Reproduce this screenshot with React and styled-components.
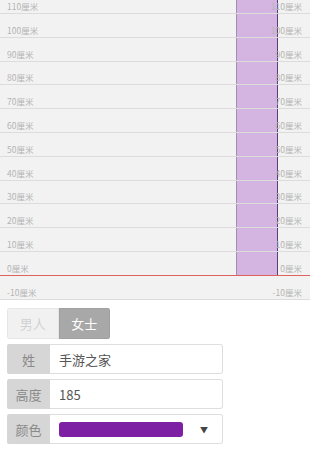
import styled, { createGlobalStyle } from "styled-components";

const marks = [110, 100, 90, 80, 70, 60, 50, 40, 30, 20, 10, 0, -10];

export default function App() {
    return (
        <>
            <Global />
            <Page>
                <Chart>
                    <Rows>
                        {marks.map((m) => (
                            <Row key={m} zero={m === 0}>
                                <span>{m}厘米</span>
                                <span>{m}厘米</span>
                            </Row>
                        ))}
                    </Rows>
                    <Bar />
                </Chart>
                <Form>
                    <Segments>
                        <Segment>男人</Segment>
                        <Segment active>女士</Segment>
                    </Segments>
                    <Field>
                        <Label>姓</Label>
                        <Input>手游之家</Input>
                    </Field>
                    <Field>
                        <Label>高度</Label>
                        <Input>185</Input>
                    </Field>
                    <Field>
                        <Label>颜色</Label>
                        <Input>
                            <Swatch />
                            <Caret>▼</Caret>
                        </Input>
                    </Field>
                </Form>
            </Page>
        </>
    );
}

const Global = createGlobalStyle`
    body{
        margin: 0;
        background: #ffffff;
        font-family: "Noto Sans CJK SC", "Liberation Sans", sans-serif;
    }
`
const Page = styled.div`
    width: 310px;
    height: 451px;
    overflow: hidden;
`
const Chart = styled.div`
    position: relative;
    height: 300px;
    overflow: hidden;
    background: #f2f2f2;
`
const Rows = styled.div`
    margin-top: -9.8px;
`
const Row = styled.div`
    height: 23.8px;
    box-sizing: border-box;
    border-bottom: 1px solid ${(p) => (p.zero ? "#e0625e" : "#dcdcdc")};
    display: flex;
    justify-content: space-between;
    align-items: flex-end;
    padding: 0 8px 2px 7px;
    position: relative;
    z-index: 2;
    span{
        font-size: 8.5px;
        line-height: 9px;
        color: #b4b4b4;
    }
`
const Bar = styled.div`
    position: absolute;
    left: 236px;
    top: 0;
    width: 42px;
    height: 276px;
    box-sizing: border-box;
    background: rgba(182, 118, 206, 0.5);
    border-left: 1px solid #a58db0;
    border-right: 1px solid #5e3b78;
    z-index: 1;
`
const Form = styled.div`
    padding: 8px 7px 0 7px;
    display: flex;
    flex-direction: column;
    gap: 5px;
`
const Segments = styled.div`
    display: flex;
    width: 103px;
    height: 31px;
    border-radius: 3px;
    overflow: hidden;
`
const Segment = styled.div`
    flex: 1;
    display: flex;
    justify-content: center;
    align-items: center;
    font-size: 13px;
    line-height: 16px;
    background: ${(p) => (p.active ? "#a8a8a8" : "#f1f1f1")};
    color: ${(p) => (p.active ? "#ffffff" : "#d2d2d2")};
    border: 1px solid ${(p) => (p.active ? "#a0a0a0" : "#e6e6e6")};
`
const Field = styled.div`
    display: flex;
    width: 216px;
    height: 30px;
`
const Label = styled.div`
    width: 43px;
    display: flex;
    justify-content: center;
    align-items: center;
    background: #d6d6d6;
    color: #8a8a8a;
    font-size: 13px;
    border-radius: 2px 0 0 2px;
`
const Input = styled.div`
    flex: 1;
    display: flex;
    align-items: center;
    padding-left: 9px;
    border: 1px solid #dedede;
    border-left: none;
    border-radius: 0 3px 3px 0;
    color: #555555;
    font-size: 13px;
`
const Swatch = styled.div`
    width: 124px;
    height: 15px;
    border-radius: 3px;
    background: #7d20a4;
`
const Caret = styled.span`
    margin-left: 17px;
    font-size: 8px;
    color: #444444;
`
